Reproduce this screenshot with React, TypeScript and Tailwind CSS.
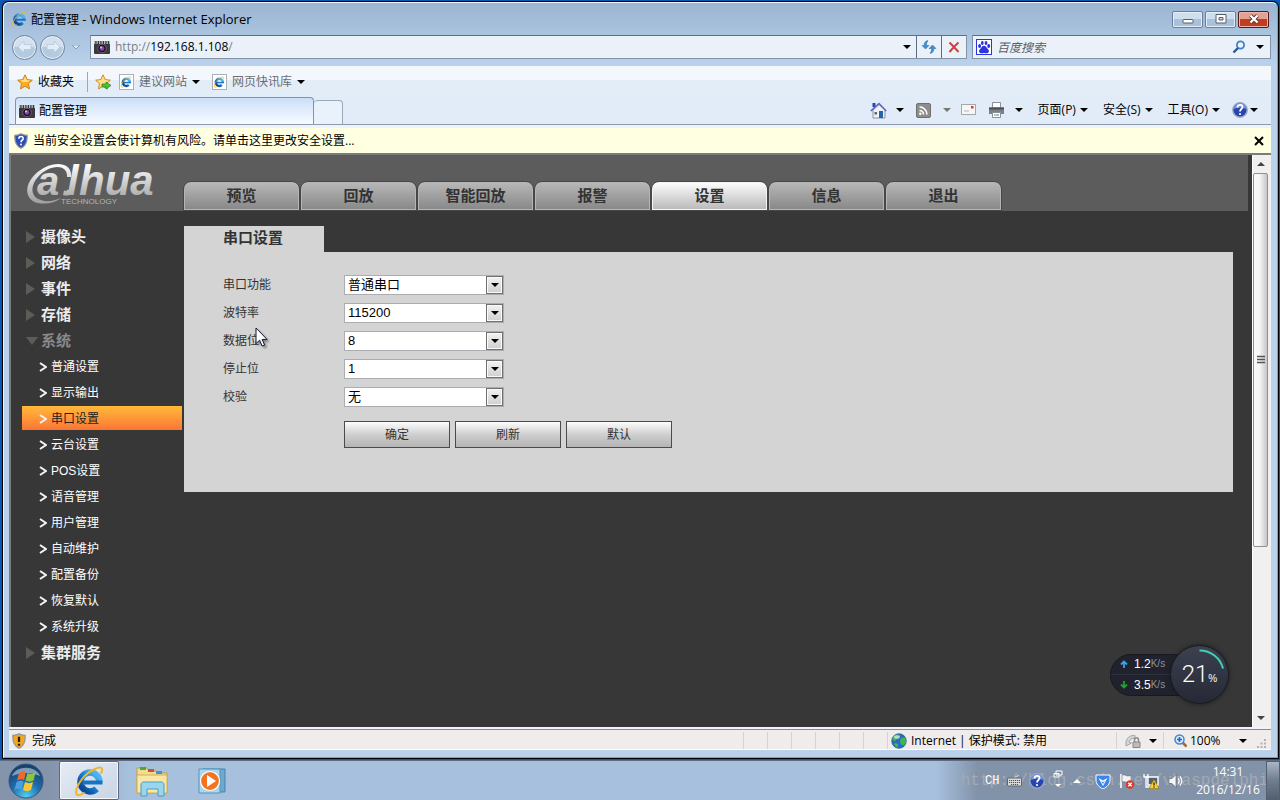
import type { ReactNode } from "react";
import clsx from "clsx";

const mainTabs = ["预览", "回放", "智能回放", "报警", "设置", "信息", "退出"];

const menuGroups = [
  { label: "摄像头" },
  { label: "网络" },
  { label: "事件" },
  { label: "存储" },
  {
    label: "系统",
    items: [
      "普通设置",
      "显示输出",
      "串口设置",
      "云台设置",
      "POS设置",
      "语音管理",
      "用户管理",
      "自动维护",
      "配置备份",
      "恢复默认",
      "系统升级",
    ],
  },
  { label: "集群服务" },
];

const serialFields = [
  { id: "serial-function", label: "串口功能", options: ["普通串口"] },
  { id: "baud-rate", label: "波特率", options: ["115200"] },
  { id: "data-bits", label: "数据位", options: ["8"] },
  { id: "stop-bits", label: "停止位", options: ["1"] },
  { id: "parity", label: "校验", options: ["无"] },
];

function Caret({ className = "fill-black" }: { className?: string }) {
  return (
    <svg viewBox="0 0 8 4" className={clsx("h-1 w-2 shrink-0", className)}>
      <path d="M0 0h8L4 4z" />
    </svg>
  );
}

function IeLogo({ className }: { className: string }) {
  return (
    <svg viewBox="0 0 32 32" className={clsx("shrink-0", className)}>
      <defs>
        <linearGradient id="ieBlue" x1="0" y1="0" x2="0" y2="1">
          <stop offset="0" stopColor="#4db4ee" />
          <stop offset="0.5" stopColor="#1b7fd0" />
          <stop offset="1" stopColor="#0b4a9a" />
        </linearGradient>
      </defs>
      <circle
        cx="17"
        cy="17"
        r="9.500"
        fill="none"
        stroke="url(#ieBlue)"
        strokeWidth="6.500"
        strokeDasharray="51.500 8.200"
        transform="rotate(46 17 17)"
      />
      <path d="M10 15.500h19.500v4H10z" fill="#1873c4" />
      <path
        d="M28 8C31 3 28 1 22 4 12 8 4 19 3 27c0 4 3 4 8 1"
        fill="none"
        stroke="#f2b52a"
        strokeWidth="2"
        strokeLinecap="round"
      />
    </svg>
  );
}

function CameraIcon() {
  return (
    <svg viewBox="0 0 16 13" className="h-[13px] w-4 shrink-0">
      <rect width="16" height="13" rx="1" fill="#3a3a3e" />
      <path d="M0 1.500h16" stroke="#b9b9b9" strokeWidth="3" strokeDasharray="1.300 1.200" />
      <circle cx="8" cy="7.500" r="4.300" fill="#16101f" stroke="#6a6a6e" />
      <circle cx="8" cy="7.500" r="2.400" fill="#8b3fa8" />
      <circle cx="7" cy="6.500" r="1" fill="#e7c8f5" />
    </svg>
  );
}

function StarIcon({ add = false }: { add?: boolean }) {
  return (
    <svg viewBox="0 0 16 16" className="size-4 shrink-0">
      <path
        d="M8 .8l2.200 4.800 5.100.6-3.800 3.500 1 5.200L8 12.300l-4.500 2.600 1-5.200L.7 6.200l5.100-.6z"
        fill={add ? "#ffe07a" : "#ffab26"}
        stroke="#c77d12"
        strokeWidth="0.900"
      />
      <path d="M8 2.500l1.500 3.600 3.500.5-3 1.400h-4L3.400 6.600l3.200-.5z" fill="#ffe08a" />
      {add && <path d="M7 10h4V8l5 3.500-5 3.500v-2H7z" fill="#4fc23a" stroke="#1f7d1c" strokeWidth="0.700" />}
    </svg>
  );
}

function PageIcon() {
  return (
    <span className="flex h-4 w-[15px] items-center border border-[#a9b0ba] bg-white">
      <IeLogo className="size-3" />
    </span>
  );
}

function ShieldIcon({ fill, mark }: { fill: string; mark: ReactNode }) {
  return (
    <svg viewBox="0 0 16 18" className="h-4 w-3.5 shrink-0">
      <path d="M8 .7c2 1.300 4.300 1.800 7 1.800C15.500 10 13 15 8 17.300 3 15 .5 10 1 2.500 3.700 2.500 6 2 8 .7z" fill={fill} stroke="#8f959e" strokeWidth="1.400" />
      {mark}
    </svg>
  );
}

const questionMark = (
  <>
    <path d="M5.500 6.500c0-3.500 5-3.500 5-.5 0 2-2.500 2-2.500 4.500" fill="none" stroke="#fff" strokeWidth="1.800" />
    <circle cx="8" cy="13" r="1.100" fill="#fff" />
  </>
);

function HelpIcon() {
  return (
    <svg viewBox="0 0 16 16" className="size-4 shrink-0">
      <circle cx="8" cy="8" r="7.200" fill="#2546b0" stroke="#9aa6bd" strokeWidth="1.400" />
      <path d="M2 7a6 6 0 0 1 12 0c-4-2-8-2-12 0z" fill="#7593df" />
      <g transform="translate(0 -1)">{questionMark}</g>
    </svg>
  );
}

function TitleBar() {
  const control =
    "flex h-[17px] w-[31px] items-center justify-center rounded-xs border border-[#6b7f98] bg-linear-to-b from-[#cfdeee] from-50% to-[#a9c2dc] to-50% shadow-[inset_0_0_0_1px_#e4eef8]";
  return (
    <div className="flex h-8 items-center px-0.5">
      <IeLogo className="size-4" />
      <h1 className="ml-1 flex-1 text-xs leading-4 text-black">
        配置管理 <span className="text-[13px]">- Windows Internet Explorer</span>
      </h1>
      <div className="flex gap-0.5">
        <button aria-label="最小化" className={control}>
          <svg viewBox="0 0 12 10" className="h-2.5 w-3">
            <rect x="1" y="5.500" width="10" height="3.500" rx="0.500" fill="#fff" stroke="#545e6c" />
          </svg>
        </button>
        <button aria-label="还原" className={control}>
          <svg viewBox="0 0 12 10" className="h-2.5 w-3">
            <path d="M1 .5h10v8.500H1zM4 3.500h4v2.500H4z" fill="#fff" fillRule="evenodd" stroke="#545e6c" />
          </svg>
        </button>
        <button
          aria-label="关闭"
          className="flex h-[17px] w-[31px] items-center justify-center rounded-xs border border-[#5a1a18] bg-linear-to-b from-[#e4a093] from-50% to-[#c03d22] to-50% shadow-[inset_0_0_0_1px_#eeb5a8]"
        >
          <svg viewBox="0 0 12 10" className="h-2.5 w-3">
            <path d="M2.500 1.500l7 7M9.500 1.500l-7 7" stroke="#5a3b3b" strokeWidth="4" />
            <path d="M2.500 1.500l7 7M9.500 1.500l-7 7" stroke="#fff" strokeWidth="2.200" />
          </svg>
        </button>
      </div>
    </div>
  );
}

function RoundArrow({ label, flip }: { label: string; flip?: boolean }) {
  return (
    <button
      aria-label={label}
      className="flex size-[25px] items-center justify-center rounded-full border border-[#71849c] bg-linear-to-b from-[#d3e0ee] from-50% to-[#b4cae1] to-50% shadow-[inset_0_0_0_1px_#e9f1f9]"
    >
      <svg viewBox="0 0 16 16" className={clsx("size-4", flip && "rotate-180")}>
        <path d="M1 8l6-6v3.500h7v5H7V14z" fill="#e4edf7" stroke="#b5c8dd" strokeWidth="0.800" />
      </svg>
    </button>
  );
}

function AddressRow() {
  return (
    <div className="mb-[7px] flex h-6 items-center">
      <div className="flex w-[81px] items-center gap-[3px] pl-[3px]">
        <RoundArrow label="后退" />
        <RoundArrow label="前进" flip />
        <Caret className="ml-1 fill-[#dfe9f5] stroke-[#8ca0ba] stroke-1" />
      </div>
      <div className="flex h-6 flex-1 items-center border border-[#8494a8] border-t-[#5f6e82] bg-[#eaf1f9]">
        <span className="pl-[3px]">
          <CameraIcon />
        </span>
        <div className="relative ml-[3px] h-full flex-1">
          <input
            aria-label="地址"
            defaultValue="http://192.168.1.108/"
            className="h-full w-full bg-transparent pl-0.5 text-xs text-transparent outline-none"
          />
          <span aria-hidden className="pointer-events-none absolute inset-0 pl-0.5 text-xs leading-[22px] text-[#7b7f86]">
            http://<span className="text-black">192.168.1.108</span>/
          </span>
        </div>
        <button aria-label="显示地址列表" className="px-[5px]">
          <Caret />
        </button>
        <button aria-label="刷新页面" className="flex h-full w-[25px] items-center justify-center border-l border-[#5f6e82]">
          <svg viewBox="0 0 16 14" className="h-3.5 w-4" fill="#3f8fd0" stroke="#2869ab" strokeWidth="0.500">
            <path d="M6.500.5C4 1.500 3 3 3.200 5.500H1l3.500 3.500L8 5.500H5.600c-.3-2 .2-3.500 1.400-4.600z" />
            <path d="M9.500 13.500c2.500-1 3.500-2.500 3.300-5H15L11.500 5 8 8.500h2.400c.3 2-.2 3.500-1.400 4.600z" />
          </svg>
        </button>
        <button aria-label="停止" className="flex h-full w-[25px] items-center justify-center border-l border-[#5f6e82]">
          <svg viewBox="0 0 12 12" className="size-3">
            <path d="M1.500 1.500C4 4 8 8 10.500 11M10.500 1.500C7 4.500 4 8 1.500 11" fill="none" stroke="#cc4242" strokeWidth="2" />
          </svg>
        </button>
      </div>
      <div className="ml-[5px] flex h-6 w-[299px] items-center border border-[#8494a8] border-t-[#5f6e82] bg-[#eaf1f9] pl-[3px] pr-1.5">
        <svg viewBox="0 0 16 16" className="size-4 shrink-0">
          <rect x="0.500" y="0.500" width="15" height="15" fill="#fff" stroke="#2a35df" />
          <g fill="#2a35df">
            <ellipse cx="3.600" cy="7" rx="1.500" ry="2" />
            <ellipse cx="6.300" cy="4" rx="1.400" ry="2" />
            <ellipse cx="10" cy="4" rx="1.400" ry="2" />
            <ellipse cx="12.700" cy="7" rx="1.500" ry="2" />
            <path d="M8 6.800c2 0 2.500 2 4 3.500 2 2 .5 4-1.500 4-1 0-1.500-.3-2.500-.3s-1.500.3-2.500.3c-2 0-3.500-2-1.500-4C5.500 8.800 6 6.800 8 6.800z" />
          </g>
        </svg>
        <input
          aria-label="搜索"
          placeholder="百度搜索"
          className="ml-[5px] h-full min-w-0 flex-1 bg-transparent text-xs italic outline-none placeholder:text-[#5c5f66]"
        />
        <button aria-label="开始搜索">
          <svg viewBox="0 0 14 14" className="size-3.5">
            <circle cx="8.500" cy="5" r="3.600" fill="#eaf6ff" stroke="#3f7fcb" strokeWidth="1.800" />
            <path d="M6 8L1.500 12.500" stroke="#31579a" strokeWidth="2.400" />
          </svg>
        </button>
        <button aria-label="搜索选项" className="ml-2.5">
          <Caret />
        </button>
      </div>
    </div>
  );
}

function FavoritesBar() {
  return (
    <div className="flex h-[31px] items-center bg-linear-to-b from-[#f4f8fd] from-45% to-[#e3edf8] to-45% pl-2 text-xs leading-4 text-[#6a6d72]">
      <button className="flex items-center gap-[5px] text-black">
        <StarIcon />
        收藏夹
      </button>
      <span className="ml-[13px] h-5 w-px bg-[#9ba7b6]" />
      <button aria-label="添加到收藏夹栏" className="ml-[7px]">
        <StarIcon add />
      </button>
      <button className="ml-2 flex items-center gap-[5px]">
        <PageIcon />
        建议网站
        <Caret />
      </button>
      <button className="ml-3 flex items-center gap-[5px]">
        <PageIcon />
        网页快讯库
        <Caret />
      </button>
    </div>
  );
}

function TabRow() {
  return (
    <div className="flex h-7 items-end border-b border-[#8c9bb0] bg-[#e1ecf8] text-xs leading-4 text-black">
      <div className="ml-1.5 flex h-[27px] w-[299px] items-center gap-1 rounded-t-sm border border-b-0 border-[#8494a8] bg-linear-to-b from-[#cbdff9] to-[#f8fbff] pl-[3px]">
        <CameraIcon />
        配置管理
      </div>
      <button aria-label="新选项卡" className="h-6 w-[29px] rounded-t-sm border border-b-0 border-l-0 border-[#9aa8ba] bg-[#e9f1fa]" />
      <div className="ml-auto flex h-full items-center pr-[13px] pb-px">
        <button aria-label="主页">
          <svg viewBox="0 0 17 17" className="size-[17px]">
            <path d="M3 8l6-5.500L15 8v8H3z" fill="#eef1f5" stroke="#8b93a1" />
            <path d="M2.500 1h3v4h-3z" fill="#2b3fc0" />
            <path d="M.8 9L9 1.500 16.200 9" fill="none" stroke="#5668c4" strokeWidth="1.600" />
            <path d="M9 9h4v7H9z" fill="#2763ab" />
            <path d="M4.500 10h2.500v2.500H4.500z" fill="#5d6470" />
          </svg>
        </button>
        <button aria-label="主页选项" className="ml-[9px]">
          <Caret />
        </button>
        <button aria-label="源" className="ml-3">
          <svg viewBox="0 0 15 15" className="size-[15px]">
            <rect x="0.500" y="0.500" width="14" height="14" rx="1.500" fill="#8d8d8d" stroke="#6f6f6f" />
            <path d="M3.500 7.500a4 4 0 0 1 4 4M3.500 4a7.500 7.500 0 0 1 7.500 7.500" fill="none" stroke="#fff" strokeWidth="1.600" />
            <circle cx="4.300" cy="10.800" r="1.200" fill="#fff" />
          </svg>
        </button>
        <Caret className="ml-3 fill-[#777]" />
        <button aria-label="阅读邮件" className="ml-2.5">
          <svg viewBox="0 0 15 12" className="h-3 w-[15px]">
            <rect x="0.500" y="0.500" width="14" height="10" fill="#f6f6f6" stroke="#a7a7a7" />
            <path d="M10 2h2.500v2.500H10z" fill="#d3423d" />
            <path d="M3 7h5" stroke="#b5b5b5" />
          </svg>
        </button>
        <button aria-label="打印" className="ml-3">
          <svg viewBox="0 0 17 16" className="h-4 w-[17px]">
            <path d="M4.500.5h8V6h-8z" fill="#fff" stroke="#8b8f96" />
            <path d="M1 5.500h15V12H1z" fill="#7b7f87" />
            <path d="M1 5.500h15v2H1z" fill="#4b4e55" />
            <path d="M4.500 10.500h8v5h-8z" fill="#fff" stroke="#8b8f96" />
            <path d="M6 13h3" stroke="#4d9f6e" />
            <path d="M9 13h2" stroke="#3e6ec7" />
          </svg>
        </button>
        <button aria-label="打印选项" className="ml-2.5">
          <Caret />
        </button>
        {["页面(P)", "安全(S)", "工具(O)"].map((label) => (
          <button key={label} className="ml-[15px] flex items-center gap-1 first-of-type:ml-0">
            {label}
            <Caret />
          </button>
        ))}
        <button aria-label="帮助" className="ml-3 flex items-center gap-0.5">
          <HelpIcon />
          <Caret />
        </button>
      </div>
    </div>
  );
}

function InfoBar() {
  return (
    <div className="mt-[3px] flex h-[25px] items-center bg-[#ffffe1] pl-[5px] pr-[7px] text-xs text-black">
      <ShieldIcon fill="#2b4db8" mark={questionMark} />
      <p className="ml-[5px] flex-1 leading-4">当前安全设置会使计算机有风险。请单击这里更改安全设置...</p>
      <button aria-label="关闭信息栏">
        <svg viewBox="0 0 10 10" className="size-2.5">
          <path d="M1 1l8 8M9 1L1 9" stroke="#000" strokeWidth="2" />
        </svg>
      </button>
    </div>
  );
}

function DahuaLogo() {
  return (
    <svg viewBox="0 -8 140 56" className="ml-[15px] h-14 w-[140px] shrink-0" aria-label="alhua technology">
      <defs>
        <linearGradient id="logoSilver" gradientUnits="userSpaceOnUse" x1="0" y1="0" x2="0" y2="38">
          <stop offset="0" stopColor="#fff" />
          <stop offset="1" stopColor="#a2a2a2" />
        </linearGradient>
      </defs>
      <g fill="url(#logoSilver)" style={{ fontFamily: "Liberation Sans, sans-serif" }}>
        <path d="M45 14C47-1 27-3 13 8-4 21-2 39 15 40.500c8 .5 15-1.500 20-5.500-7 3-14 4.500-20 2C2 33 5 19 16 10 27 1 42 2 41 14z" />
        <path d="M46 28c-.5 3-2 4.500-5 4.500-1.500 0-3 0-4-.5l1-4.500c2 .7 3 .5 3.500-1z" />
        <g fontWeight="bold" fontStyle="italic">
          <text x="11" y="32" fontSize="40">
            a
          </text>
          <text x="41" y="32" fontSize="42">
            l
          </text>
          <text x="53" y="32" fontSize="42">
            hua
          </text>
        </g>
        <text x="35" y="41" fontSize="8" fill="#b4b4b4">
          TECHNOLOGY
        </text>
      </g>
    </svg>
  );
}

function PageHeader() {
  return (
    <header className="mr-1 flex h-14 bg-[#5c5c5c]">
      <div className="w-[172px]">
        <DahuaLogo />
      </div>
      <nav className="mt-auto flex">
        {mainTabs.map((tab) => (
          <button
            key={tab}
            className={clsx(
              "h-[30px] w-[117px] rounded-t-lg border border-[#474747] text-[15px] leading-6 font-bold text-[#333]",
              tab === "设置"
                ? "bg-linear-to-b from-white to-[#b8b8b8] shadow-[inset_0_0_0_1px_#f5f5f5]"
                : "bg-linear-to-b from-[#b9b9b9] to-[#878787] shadow-[inset_0_0_0_1px_#b5b5b5]"
            )}
          >
            {tab}
          </button>
        ))}
      </nav>
    </header>
  );
}

function Sidebar() {
  return (
    <aside className="w-[173px] shrink-0 pt-3">
      <ul>
        {menuGroups.map((group) => (
          <li key={group.label}>
            <a
              href="#"
              className={clsx(
                "flex h-[26px] items-center pt-0.5 pl-[15px] text-[15px] leading-6 font-bold",
                group.items ? "text-[#8a8a8a]" : "text-[#ececec]"
              )}
            >
              <svg viewBox="0 0 12 12" className="mr-[3px] size-3 shrink-0 fill-[#5e5c57]">
                {group.items ? <path d="M0 2h12L6 10z" /> : <path d="M0 0l9 6-9 6z" />}
              </svg>
              {group.label}
            </a>
            {group.items && (
              <ul>
                {group.items.map((item) => (
                  <li key={item} className="py-px pl-[11px] pr-0.5">
                    <a
                      href="#"
                      className={clsx(
                        "flex h-6 items-center gap-1 pt-0.5 pl-[17px] text-xs",
                        item === "串口设置"
                          ? "bg-linear-to-b from-[#ffb93a] to-[#fb7435] text-[#222]"
                          : "text-white"
                      )}
                    >
                      <svg viewBox="0 0 8 10" className="h-2.5 w-2 shrink-0">
                        <path d="M1 1l6 4-6 4" fill="none" stroke="#f5f5f5" strokeWidth="2" />
                      </svg>
                      {item}
                    </a>
                  </li>
                ))}
              </ul>
            )}
          </li>
        ))}
      </ul>
    </aside>
  );
}

function SerialSettings() {
  return (
    <main className="mr-[19px] min-w-0 flex-1 pt-[15px] text-xs text-[#333]">
      <h2 className="h-[26px] w-[140px] bg-[#d4d4d4] pl-[39px] text-[15px] leading-6 font-bold">串口设置</h2>
      <form className="relative h-60 bg-[#d4d4d4] pl-[39px] pt-[23px]" onSubmit={(e) => e.preventDefault()}>
        <div className="flex flex-col gap-2">
          {serialFields.map((field) => (
            <div key={field.id} className="flex h-5 items-center">
              <label htmlFor={field.id} className="w-[121px] leading-5">
                {field.label}
              </label>
              <div className="relative">
                <select
                  id={field.id}
                  className="block h-5 w-40 appearance-none border border-[#abadb3] bg-white pl-[3px] text-[13px] leading-[18px] text-black outline-none"
                >
                  {field.options.map((option) => (
                    <option key={option}>{option}</option>
                  ))}
                </select>
                <span className="pointer-events-none absolute inset-y-px right-px flex w-[17px] items-center justify-center border border-[#707070] bg-linear-to-b from-[#f2f2f2] to-[#cfcfcf] shadow-[inset_0_0_0_1px_#fafafa]">
                  <Caret />
                </span>
              </div>
            </div>
          ))}
        </div>
        <div className="mt-3.5 flex gap-[5px] pl-[121px]">
          {["确定", "刷新", "默认"].map((action) => (
            <button
              key={action}
              className="h-[27px] w-[106px] border border-[#4b4b4b] bg-linear-to-b from-[#fdfdfd] via-[#cfcfcf] to-[#b5b3b3] leading-5"
            >
              {action}
            </button>
          ))}
        </div>
        <svg viewBox="0 0 14 21" className="absolute left-[71px] top-[75px] h-[21px] w-3.5 drop-shadow-[2px_2px_1px_#00000060]">
          <path d="M1 1v15.500l3.600-3.300 2.500 5.800 2.500-1-2.500-5.600H12z" fill="#fff" stroke="#16162c" />
        </svg>
      </form>
    </main>
  );
}

function ScrollBar() {
  return (
    <div className="flex w-[19px] shrink-0 flex-col border-l border-white bg-[#f0f0f0] pr-[3px]">
      <button aria-label="向上滚动" className="flex h-[18px] items-center justify-center">
        <Caret className="rotate-180 fill-[#444]" />
      </button>
      <div className="flex grow-[373] basis-0 items-center justify-center rounded-xs border border-[#8f8f8f] bg-linear-to-r from-[#f8f8f8] from-40% to-[#c6c6ca]">
        <svg viewBox="0 0 8 9" className="h-[9px] w-2">
          <path d="M0 1.500h8M0 4.500h8M0 7.500h8" stroke="#555" strokeWidth="1.500" />
        </svg>
      </div>
      <div className="grow-[163] basis-0" />
      <button aria-label="向下滚动" className="flex h-[18px] items-center justify-center">
        <Caret className="fill-[#444]" />
      </button>
    </div>
  );
}

function TrafficWidget() {
  return (
    <div className="absolute bottom-[23px] right-[23px] flex items-center text-white">
      <div className="-mr-8 flex h-[42px] w-[92px] flex-col rounded-l-full border border-[#16181f] bg-[#20232d] text-xs">
        {[
          { value: "1.2", up: true },
          { value: "3.5", up: false },
        ].map((row) => (
          <div key={row.value} className="flex h-5 items-center pl-[9px] leading-5 first:border-b first:border-[#2e323e]">
            <svg viewBox="0 0 8 8" className={clsx("size-2", row.up ? "stroke-[#35a4e8]" : "rotate-180 stroke-[#1ea32c]")}>
              <path d="M4 8V1.500M1 4.500l3-3 3 3" fill="none" strokeWidth="1.800" />
            </svg>
            <span className="ml-1.5">{row.value}</span>
            <span className="text-[10px] text-[#8d919a]">K/s</span>
          </div>
        ))}
      </div>
      <div className="relative flex size-[59px] items-baseline justify-center rounded-full border border-[#171921] bg-linear-to-b from-[#3d4150] to-[#262935] pt-3 shadow-[0_0_4px_#1a1a1a]">
        <svg viewBox="0 0 58 58" className="absolute inset-0">
          <path d="M29 4.500A24.500 24.500 0 0 1 53 23" fill="none" stroke="#45d0b4" strokeWidth="2" />
        </svg>
        <span className="font-['Roboto'] text-2xl leading-8 font-light">21</span>
        <span className="text-[10px]">%</span>
      </div>
    </div>
  );
}

function StatusBar() {
  return (
    <footer className="mt-0.5 flex h-[21px] items-center border-t border-b border-t-[#8b8b8b] border-b-white bg-[#f0eceb] pt-0.5 text-xs leading-4 text-black">
      <div className="flex flex-1 items-center gap-1.5 pl-[3px]">
        <ShieldIcon
          fill="#f2a825"
          mark={<path d="M8 4v6M8 12v2.500" stroke="#222" strokeWidth="2.600" />}
        />
        完成
      </div>
      <div className="flex h-full">
        {Array.from({ length: 6 }, (_, i) => (
          <span key={i} className="w-6 border-l border-[#d6d2d1]" />
        ))}
      </div>
      <div className="flex h-full w-[229px] items-center gap-1 border-l border-[#d6d2d1] pl-[3px]">
        <svg viewBox="0 0 16 16" className="size-4 shrink-0">
          <circle cx="8" cy="8" r="7.300" fill="#2a6bc8" stroke="#34558a" strokeWidth="0.700" />
          <path d="M2 4c2-3 5-3 7-2L7 5 4 8 1.500 7zM10 5l4-.5c1.500 3 1 6-1 8l-3-1-1-3zM4 10l3 1v3.500c-2-.5-3.500-2-4-3z" fill="#3fb84a" />
          <ellipse cx="6" cy="4" rx="3" ry="1.800" fill="#fff" opacity="0.600" />
        </svg>
        Internet | 保护模式: 禁用
      </div>
      <button aria-label="隐私" className="flex h-full w-[47px] items-center gap-2 border-l border-[#d6d2d1] pl-2">
        <svg viewBox="0 0 16 14" className="h-3.5 w-4 shrink-0">
          <path d="M1 8C2 3 6 1 10 1.500v3C7 4 5 5 4 8l2.500 1L1 12z" fill="#d5d5d5" stroke="#a5a5a5" />
          <path d="M9.500 8V6c0-3 4-3 4 0v2" fill="none" stroke="#8d8d8d" strokeWidth="1.500" />
          <path d="M8 8h7v5.500H8z" fill="#bdbdbd" stroke="#868686" />
        </svg>
        <Caret />
      </button>
      <button className="flex h-full w-[108px] items-center border-l border-[#d6d2d1] pl-2.5">
        <svg viewBox="0 0 14 14" className="mr-0.5 size-3.5 shrink-0">
          <path d="M8.500 8.500l4 4" stroke="#a3693a" strokeWidth="2.500" />
          <circle cx="5.500" cy="5.500" r="4.500" fill="#d9edff" stroke="#4a86cc" strokeWidth="1.500" />
          <path d="M3 5.500h5M5.500 3v5" stroke="#2468c5" strokeWidth="1.700" />
        </svg>
        100%
        <Caret className="ml-[18px] fill-black" />
        <svg viewBox="0 0 10 10" className="ml-auto mr-1 size-2.5 self-end fill-[#b5b1b0]">
          <path d="M7 0h2v2H7zM3.500 3.500h2v2h-2zM7 3.500h2v2H7zM0 7h2v2H0zM3.500 7h2v2h-2zM7 7h2v2H7z" />
        </svg>
      </button>
    </footer>
  );
}

function Tray() {
  return (
    <div className="relative flex h-full items-center text-white">
      <span
        aria-hidden
        className="pointer-events-none absolute right-3 top-2 font-['Liberation_Mono',monospace] text-base leading-6 whitespace-nowrap text-[#a3a9b2]"
      >
        http://blog.csdn.net/vbaspdelphi
      </span>
      <div className="relative flex items-center">
        <span className="w-[22px] font-['Liberation_Mono',monospace] text-xs leading-4">CH</span>
        <svg viewBox="0 0 15 13" className="h-[13px] w-[15px]">
          <path d="M7.500 4c0-2 4-1 4-3" fill="none" stroke="#e5e5e5" />
          <rect x="0.500" y="4" width="14" height="8" rx="1" fill="#d9d9d9" stroke="#5e6672" />
          <path d="M2 6.500h11M2 8.500h11M4 10.500h7" stroke="#555" strokeDasharray="1.200 0.800" />
        </svg>
        <span className="ml-[7px]">
          <HelpIcon />
        </span>
        <svg viewBox="0 0 10 18" className="ml-2 mb-1 h-[18px] w-2.5">
          <path d="M3 1h6v4H3zM1 3.500h5v3.500H1z" fill="#7f90a8" stroke="#fff" />
          <path d="M2 14h6l-3 3z" fill="#fff" />
        </svg>
        <Caret className="ml-2.5 rotate-180 fill-white" />
        <svg viewBox="0 0 16 16" className="ml-3.5 size-4">
          <path d="M1 2h14v5c0 4-3 7-7 9-4-2-7-5-7-9z" fill="#3c86ea" stroke="#fff" />
          <path d="M3.500 5L8 7.500 12.500 5 8 13z" fill="#fff" />
          <path d="M6 8l2 1.200L10 8l-2 3z" fill="#3c86ea" />
        </svg>
        <svg viewBox="0 0 16 16" className="ml-2 size-4">
          <path d="M2 1v14" stroke="#fff" strokeWidth="1.600" />
          <path d="M3 2c3-1 4 2 9 .5V9C8 10.500 6 8 3 9z" fill="#f3f3f3" stroke="#4f5966" strokeWidth="0.500" />
          <circle cx="11" cy="11.500" r="4.300" fill="#d93a2e" />
          <path d="M9.300 9.800l3.400 3.400M12.700 9.800l-3.400 3.400" stroke="#fff" strokeWidth="1.400" />
        </svg>
        <svg viewBox="0 0 17 16" className="ml-2 h-4 w-[17px]">
          <path d="M5 4h10v8H5z" fill="#56616f" stroke="#fff" strokeWidth="1.400" />
          <path d="M1 1v3h4V1M3 4v10h4" fill="none" stroke="#fff" strokeWidth="1.300" />
          <path d="M11 6.500l5 9H6z" fill="#ffd22e" stroke="#977000" strokeWidth="0.600" />
          <path d="M11 9.500v3M11 13.300v1.200" stroke="#222" strokeWidth="1.300" />
        </svg>
        <svg viewBox="0 0 16 16" className="ml-2 size-4">
          <path d="M1 5.500h3L8 1.500v13l-4-4H1z" fill="#f5f5f5" stroke="#4f5966" strokeWidth="0.600" />
          <path d="M10 5.500c1.300 1.500 1.300 3.500 0 5M12 3.500c2.500 3 2.500 6 0 9" fill="none" stroke="#fff" strokeWidth="1.200" />
        </svg>
      </div>
      <time className="relative ml-2 w-[72px] text-center text-xs leading-[18px]">
        14:31
        <br />
        2016/12/16
      </time>
      <button
        aria-label="显示桌面"
        className="relative ml-0.5 h-full w-3.5 border border-[#536071] bg-linear-to-b from-[#a9b6c6] via-[#6f7d90] to-[#55616f]"
      />
    </div>
  );
}

function Taskbar() {
  return (
    <div className="flex h-10 items-center justify-between border-t border-[#5b6c84] bg-linear-to-r from-[#8494ab] from-4% via-[#a6c0dd] via-10% to-[#a6c0dd] to-72%">
      <div className="flex h-full items-center">
        <button aria-label="开始" className="ml-2 size-9">
          <svg viewBox="0 0 36 36" className="size-9">
            <defs>
              <radialGradient id="orb" cx="0.5" cy="0.95" r="0.9">
                <stop offset="0" stopColor="#4fd0f2" />
                <stop offset="0.5" stopColor="#1f6ba8" />
                <stop offset="1" stopColor="#173f6b" />
              </radialGradient>
            </defs>
            <circle cx="18" cy="18" r="17" fill="url(#orb)" stroke="#38577c" />
            <path d="M4 13C8 2 28 2 32 13 22 9 14 9 4 13z" fill="#fff" opacity="0.450" />
            <path d="M11 10c3-2 5-2 7-1l-2 8c-2-1-4-1-7 .5z" fill="#ee6a2c" />
            <path d="M19.500 10c3 1.500 5 1 8-.5l-2 8c-3 1.500-5 1.500-8 0z" fill="#8cc63f" />
            <path d="M8.500 19c3-1.500 5-1.500 7-.5l-2 8c-2-1-4-1-7 .5z" fill="#4d9de0" />
            <path d="M17 19c3 1.500 5 1.500 8 0l-2 8c-3 1.500-5 1.500-8 0z" fill="#fbc630" />
          </svg>
        </button>
        <button
          aria-label="Internet Explorer"
          className="ml-[15px] flex h-[39px] w-[60px] items-center justify-center rounded-xs border border-[#5a6a80] bg-linear-to-br from-[#e6ecf4] to-[#c8d5e5] shadow-[inset_0_0_0_1px_#f5f8fb]"
        >
          <IeLogo className="size-8" />
        </button>
        <button aria-label="资源管理器" className="ml-4">
          <svg viewBox="0 0 34 32" className="h-8 w-[34px]">
            <path d="M2 3h10l2 3h8l2 2h8v20H2z" fill="#f3dc8c" stroke="#c49d3f" />
            <path d="M5 2h6v3H5z" fill="#46a84a" />
            <path d="M13 4h6v3h-6z" fill="#c9523e" />
            <path d="M21 6h6v3h-6z" fill="#3d94dc" />
            <path d="M2 10h30v18H2z" fill="#f8e8a8" stroke="#d2ae55" />
            <path d="M6 31V20c0-2 1-3 3-3h17c2 0 3 1 3 3v11h-6v-7H12v7z" fill="#9ad5ee" stroke="#4a9cc4" />
          </svg>
        </button>
        <button aria-label="媒体播放器" className="ml-[29px]">
          <svg viewBox="0 0 30 28" className="h-7 w-[30px]">
            <path d="M5 2h22v23H5z" fill="#6ea9cf" stroke="#4583ad" />
            <path d="M1 2h21v24H1z" fill="#a9d7ef" stroke="#5694bb" />
            <circle cx="12" cy="14" r="9.500" fill="#f37321" stroke="#fff" strokeWidth="1.200" />
            <path d="M9 8l9 6-9 6z" fill="#fff" />
          </svg>
        </button>
      </div>
      <div className="h-full bg-linear-to-r from-transparent to-[#8293a9] to-[40px] pl-12">
        <Tray />
      </div>
    </div>
  );
}

export default function App() {
  return (
    <div className="flex min-h-screen flex-col bg-[#0a56b0] font-['Open_Sans','Noto_Sans_CJK_SC',sans-serif]">
      <div className="mb-px ml-0.5 mr-px mt-px flex flex-1 flex-col rounded-t-md border border-black">
        <div className="flex flex-1 flex-col rounded-t-md border border-[#eef5fc] border-b-[#29c5e6] border-r-[#29c5e6] bg-[#b9d1ea] bg-linear-to-b from-[#9ab4d2] to-[#b9d1ea] to-[60px] pb-[7px] pl-[5px] pr-1.5">
          <TitleBar />
          <AddressRow />
          <div className="flex flex-1 flex-col bg-[#f0f4fa]">
            <FavoritesBar />
            <TabRow />
            <InfoBar />
            <div className="flex flex-1 border-l-2 border-t-2 border-[#7b7b7b] font-['Liberation_Sans','Noto_Sans_CJK_SC',sans-serif]">
              <div className="relative flex flex-1 flex-col bg-[#373737]">
                <PageHeader />
                <div className="flex">
                  <Sidebar />
                  <SerialSettings />
                </div>
                <TrafficWidget />
              </div>
              <ScrollBar />
            </div>
            <StatusBar />
          </div>
        </div>
      </div>
      <Taskbar />
    </div>
  );
}
